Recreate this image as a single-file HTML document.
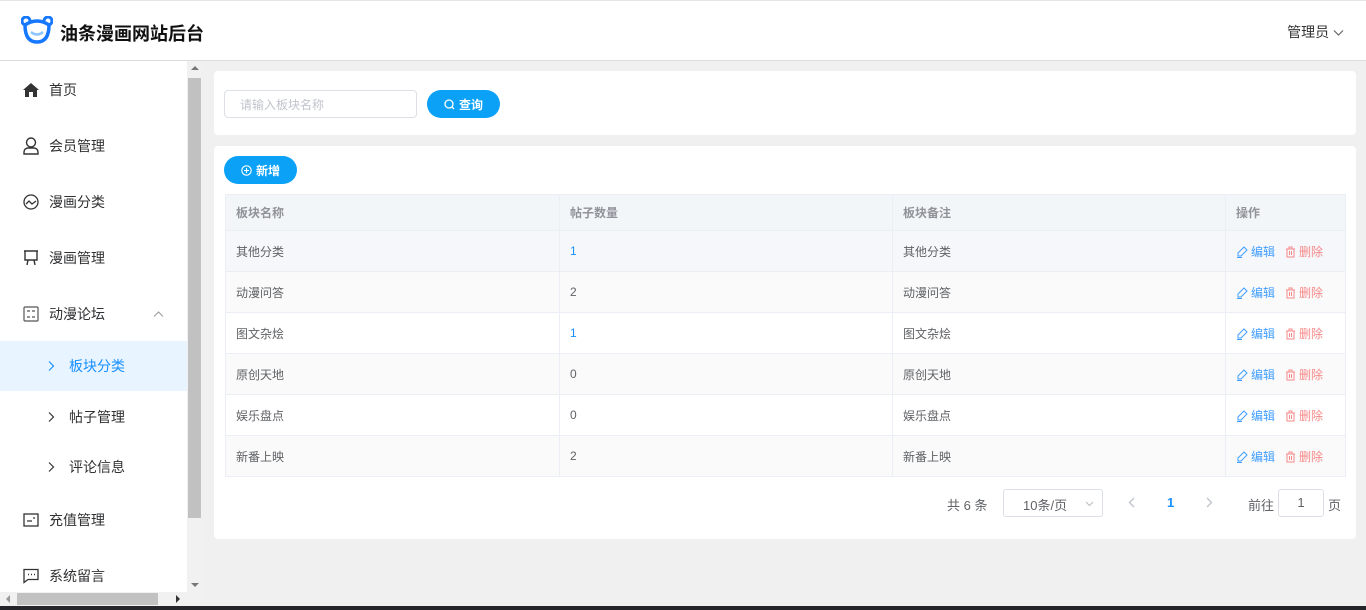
<!DOCTYPE html>
<html><head><meta charset="utf-8"><style>
*{margin:0;padding:0;box-sizing:border-box}
body{width:1366px;height:610px;overflow:hidden;background:#f0f0f0;font-family:"Liberation Sans","Noto Sans CJK SC",sans-serif;font-size:13px;color:#606266;position:relative}
.hdr{position:absolute;left:0;top:0;width:1366px;height:61px;background:#fff;border-bottom:1px solid #dcdcdc;border-top:1px solid #e6e6e6}
.logo{position:absolute;left:21px;top:15px}
.title{position:absolute;left:60px;top:19px;font-size:18px;font-weight:bold;color:#111}
.user{position:absolute;right:22px;top:21px;font-size:14px;color:#333}
.side{position:absolute;left:0;top:61px;width:187px;height:531px;background:#fff;overflow:hidden}
.mi{position:absolute;left:0;width:187px;height:50px;font-size:14px;color:#303133}
.mi span{position:absolute;left:49px;top:50%;transform:translateY(-50%)}
.mi svg{position:absolute;left:23px;top:50%;transform:translateY(-50%)}
.sub span{left:69px}
.sub .ar{position:absolute;left:48px;top:50%;transform:translateY(-50%)}
.vs{position:absolute;left:187px;top:61px;width:15px;height:531px;background:#f1f1f1}
.hs{position:absolute;left:0;top:592px;width:202px;height:14px;background:#f1f1f1}
.bot{position:absolute;left:0;top:606px;width:1366px;height:4px;background:#23252b}
.card{position:absolute;left:214px;width:1142px;background:#fff;border-radius:4px}
.inp{position:absolute;left:10px;top:19px;width:193px;height:28px;border:1px solid #dcdfe6;border-radius:4px;color:#c0c4cc;font-size:12px;padding:5px 0 0 15px}
.btn{position:absolute;height:28px;border-radius:14px;background:#0aa1f7;color:#fff;font-size:12px;font-weight:bold;display:flex;align-items:center;justify-content:center;gap:4px}
table{position:absolute;left:11px;top:48px;width:1121px;border-collapse:collapse;font-size:12px}
td,th{border:1px solid #ebeef5;height:41px;padding-left:10px;text-align:left;color:#606266;font-weight:normal}
th{height:36px;background:#f3f6f9;color:#909399;font-weight:bold}
tr.g td{background:#fafafa}
tr.h td{background:#f5f7fa}
.bl{color:#1890ff}
.ed{color:#409eff}.dl{color:#f78989;margin-left:10px}
.ed svg,.dl svg{vertical-align:-2px;margin-right:3px}
</style></head><body>
<div class="hdr">
<svg class="logo" width="32" height="28" viewBox="0 0 32 28"><circle cx="5" cy="5" r="4" fill="none" stroke="#1677ff" stroke-width="3"/><circle cx="27" cy="5" r="4" fill="none" stroke="#1677ff" stroke-width="3"/><path d="M4 9 Q4 26 16 26 Q28 26 28 9 Q22 5 16 5 Q10 5 4 9Z" fill="#fff" stroke="#1677ff" stroke-width="3.5"/><path d="M10 16 Q16 21 22 16" fill="none" stroke="#8ec5ff" stroke-width="2.5"/></svg>
<div class="title">油条漫画网站后台</div>
<div class="user">管理员 <svg width="11" height="8" viewBox="0 0 11 8"><path d="M1 1.5l4.5 4.5 4.5-4.5" fill="none" stroke="#666" stroke-width="1.2"/></svg></div>
</div>
<div class="side">
<div class="mi" style="top:4px"><svg width="16" height="14" viewBox="0 0 16 14"><path d="M8 0L0 7h2v7h4V9h4v5h4V7h2z" fill="#333"/></svg><span>首页</span></div>
<div class="mi" style="top:60px"><svg width="16" height="18" viewBox="0 0 16 18"><circle cx="8" cy="5.5" r="4.5" fill="none" stroke="#333" stroke-width="1.4"/><path d="M1 17v-2a4 4 0 014-4h6a4 4 0 014 4v2z" fill="none" stroke="#333" stroke-width="1.4"/></svg><span>会员管理</span></div>
<div class="mi" style="top:116px"><svg width="16" height="16" viewBox="0 0 16 16"><circle cx="8" cy="8" r="7" fill="none" stroke="#333" stroke-width="1.3"/><path d="M3 10l3-3 3 3 4-3" fill="none" stroke="#333" stroke-width="1.3"/></svg><span>漫画分类</span></div>
<div class="mi" style="top:172px"><svg width="16" height="16" viewBox="0 0 16 16"><path d="M1 1h14M2 1v9h12V1M5 10l-1 5M11 10l1 5" fill="none" stroke="#333" stroke-width="1.4"/></svg><span>漫画管理</span></div>
<div class="mi" style="top:228px"><svg width="16" height="16" viewBox="0 0 16 16"><rect x="1" y="1" width="14" height="14" rx="1" fill="none" stroke="#555" stroke-width="1.2"/><path d="M4 5h3M9 11h3M4 11h3M9 5h3" stroke="#555" stroke-width="1.2"/></svg><span>动漫论坛</span><svg style="left:153px" width="11" height="7" viewBox="0 0 11 7"><path d="M1 6l4.5-4.5L10 6" fill="none" stroke="#999" stroke-width="1"/></svg></div>
<div class="mi sub" style="top:280px;background:#e8f4ff;color:#1890ff"><svg class="ar" style="left:48px" width="7" height="11" viewBox="0 0 7 11"><path d="M1 1l4.5 4.5L1 10" fill="none" stroke="#1890ff" stroke-width="1.2"/></svg><span>板块分类</span></div>
<div class="mi sub" style="top:331px"><svg class="ar" style="left:48px" width="7" height="11" viewBox="0 0 7 11"><path d="M1 1l4.5 4.5L1 10" fill="none" stroke="#333" stroke-width="1.2"/></svg><span>帖子管理</span></div>
<div class="mi sub" style="top:381px"><svg class="ar" style="left:48px" width="7" height="11" viewBox="0 0 7 11"><path d="M1 1l4.5 4.5L1 10" fill="none" stroke="#333" stroke-width="1.2"/></svg><span>评论信息</span></div>
<div class="mi" style="top:434px"><svg width="16" height="14" viewBox="0 0 16 14"><rect x="1" y="1" width="14" height="12" fill="none" stroke="#333" stroke-width="1.3"/><path d="M4 8h5M10 5h2" stroke="#333" stroke-width="1.3"/></svg><span>充值管理</span></div>
<div class="mi" style="top:490px"><svg width="16" height="15" viewBox="0 0 16 15"><path d="M1 1h14v10H5l-4 3z" fill="none" stroke="#333" stroke-width="1.3"/><path d="M5 6h1M8 6h1M11 6h1" stroke="#333" stroke-width="1.5"/></svg><span>系统留言</span></div>
</div>
<div class="vs"><div style="position:absolute;left:4px;top:5px;border:4px solid transparent;border-bottom-color:#777;border-top:0"></div><div style="position:absolute;left:1px;top:17px;width:13px;height:440px;background:#c1c1c1"></div><div style="position:absolute;left:4px;bottom:5px;border:4px solid transparent;border-top-color:#777;border-bottom:0"></div></div>
<div class="hs"><div style="position:absolute;left:17px;top:1px;width:141px;height:12px;background:#c1c1c1"></div><div style="position:absolute;left:6px;top:3px;border:4px solid transparent;border-right-color:#999;border-left:0"></div><div style="position:absolute;left:176px;top:3px;border:4px solid transparent;border-left-color:#333;border-right:0"></div></div>
<div class="bot"></div>
<div class="card" style="top:71px;height:64px">
<div class="inp">请输入板块名称</div>
<div class="btn" style="left:213px;top:19px;width:73px"><svg width="11" height="11" viewBox="0 0 11 11"><circle cx="5" cy="5" r="4" fill="none" stroke="#fff" stroke-width="1.3"/><path d="M8 8l2 2" stroke="#fff" stroke-width="1.3"/></svg>查询</div>
</div>
<div class="card" style="top:146px;height:393px">
<div class="btn" style="left:10px;top:10px;width:73px"><svg width="11" height="11" viewBox="0 0 11 11"><circle cx="5.5" cy="5.5" r="4.7" fill="none" stroke="#fff" stroke-width="1.1"/><path d="M5.5 3v5M3 5.5h5" stroke="#fff" stroke-width="1.1"/></svg>新增</div>
<table>
<tr><th style="width:334px">板块名称</th><th style="width:333px">帖子数量</th><th style="width:333px">板块备注</th><th>操作</th></tr>
<tr class="h"><td>其他分类</td><td class="bl">1</td><td>其他分类</td><td>OPS</td></tr>
<tr class="g"><td>动漫问答</td><td>2</td><td>动漫问答</td><td>OPS</td></tr>
<tr><td>图文杂烩</td><td class="bl">1</td><td>图文杂烩</td><td>OPS</td></tr>
<tr class="g"><td>原创天地</td><td>0</td><td>原创天地</td><td>OPS</td></tr>
<tr><td>娱乐盘点</td><td>0</td><td>娱乐盘点</td><td>OPS</td></tr>
<tr class="g"><td>新番上映</td><td>2</td><td>新番上映</td><td>OPS</td></tr>
</table>
<div style="position:absolute;left:733px;top:349px;font-size:13px">共 6 条</div>
<div style="position:absolute;left:789px;top:343px;width:100px;height:28px;border:1px solid #dcdfe6;border-radius:3px;padding:5px 0 0 19px">10条/页 <svg style="position:absolute;right:8px;top:11px" width="9" height="6" viewBox="0 0 9 6"><path d="M1 1l3.5 3.5L8 1" fill="none" stroke="#bbb"/></svg></div>
<svg style="position:absolute;left:914px;top:351px" width="7" height="11" viewBox="0 0 7 11"><path d="M6 1L1.5 5.5 6 10" fill="none" stroke="#c0c4cc" stroke-width="1.4"/></svg>
<div style="position:absolute;left:953px;top:349px;color:#1890ff;font-weight:bold">1</div>
<svg style="position:absolute;left:992px;top:351px" width="7" height="11" viewBox="0 0 7 11"><path d="M1 1l4.5 4.5L1 10" fill="none" stroke="#c0c4cc" stroke-width="1.4"/></svg>
<div style="position:absolute;left:1034px;top:349px">前往</div>
<div style="position:absolute;left:1064px;top:343px;width:46px;height:28px;border:1px solid #dcdfe6;border-radius:3px;text-align:center;padding-top:5px">1</div>
<div style="position:absolute;left:1114px;top:349px">页</div>
</div>
<script>
var ops='<span class="ed"><svg width="12" height="12" viewBox="0 0 12 12"><path d="M8 1l3 3-6 6H2V7z M1 11.5h5" fill="none" stroke="#409eff" stroke-width="1"/></svg>编辑</span><span class="dl"><svg width="11" height="12" viewBox="0 0 11 12"><path d="M1 3h9M4 3V1h3v2M2 3v8h7V3M4.5 5v4M6.5 5v4" fill="none" stroke="#f78989" stroke-width="1"/></svg>删除</span>';
document.querySelectorAll('td').forEach(function(t){if(t.textContent=='OPS')t.innerHTML=ops;});
</script>
</body></html>
